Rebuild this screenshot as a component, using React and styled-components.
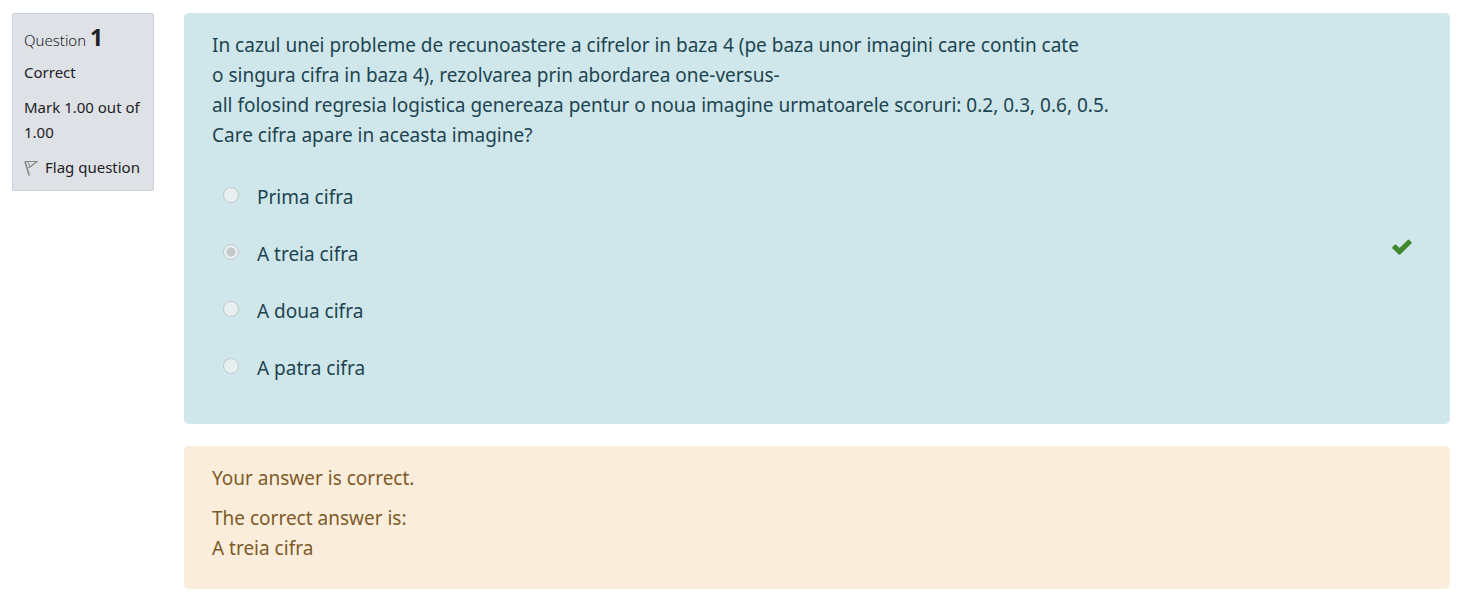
import React from 'react';
import styled, { createGlobalStyle } from 'styled-components';

const GlobalStyle = createGlobalStyle`
  * { box-sizing: border-box; }
  body {
    margin: 0;
    background: #fff;
    font-family: "Segoe UI", "Noto Sans", "Open Sans", sans-serif;
    font-size: 19px;
    line-height: 30px;
  }
`;

const Question = styled.main`
  display: flex;
  align-items: flex-start;
  gap: 30px;
  padding: 13px 15px 16px 12px;
`;

const Info = styled.aside`
  flex: 0 0 142px;
  padding: 9px 10px 10px 11px;
  border: 1px solid #cad0d7;
  border-radius: 2px;
  background: #dee2e6;
  color: #1d2125;
  font-size: 15px;
  line-height: 25px;
`;

const Number = styled.h3`
  margin: 0 0 6px;
  font-size: 15px;
  font-weight: 300;
  line-height: 28px;
`;

const NumberValue = styled.span`
  font-size: 23px;
  font-weight: 700;
  line-height: 28px;
`;

const InfoLine = styled.div`
  margin-bottom: 10px;
`;

const FlagButton = styled.button`
  display: flex;
  align-items: center;
  gap: 7px;
  padding: 0;
  border: 0;
  background: none;
  color: inherit;
  font: inherit;
  white-space: nowrap;
`;

const Content = styled.div`
  flex: 1;
  min-width: 0;
  display: flex;
  flex-direction: column;
  gap: 22px;
`;

const Panel = styled.section`
  border-radius: 5px;
  padding: 17px 28px ${(p) => (p.$feedback ? 26 : 28)}px;
  background: ${(p) => (p.$feedback ? '#fbeddb' : '#cfe6ea')};
  color: ${(p) => (p.$feedback ? '#7d5a29' : '#1d4451')};
`;

const Text = styled.p`
  margin: 0 0 ${(p) => p.$gap || 0}px;
`;

const Options = styled.fieldset`
  margin: 0;
  padding: 0;
  border: 0;
`;

const Option = styled.div`
  display: flex;
  align-items: center;
  min-height: 57px;
  padding: 0 10px 0 11px;
`;

const Radio = styled.input`
  appearance: none;
  flex: none;
  width: 16px;
  height: 16px;
  margin: 0 18px 4px 0;
  border: 1px solid #c4c9cb;
  border-radius: 50%;
  background: #e7eff1;

  &:checked {
    background: radial-gradient(circle, #c4c9ca 0 4px, #e7eff1 5px);
  }
`;

const OptionLabel = styled.label`
  flex: 1;
`;

const CheckIcon = styled.svg`
  width: 20px;
  height: 16px;
  margin-bottom: 14px;
  fill: #42862d;
`;

const FlagIcon = () => (
  <svg width="14" height="16" viewBox="0 0 14 16" fill="none" stroke="#858789" aria-hidden="true">
    <path d="M1 1.5 L5.2 15.5" strokeWidth="1.6" />
    <path d="M1 1.5 H13 L4.5 8" strokeWidth="1.2" />
    <path d="M4 2 L6 7" strokeWidth="1" />
  </svg>
);

const answers = ['Prima cifra', 'A treia cifra', 'A doua cifra', 'A patra cifra'];
const selected = 1;

export default function App() {
  return (
    <>
      <GlobalStyle />
      <Question>
        <Info>
          <Number>
            Question <NumberValue>1</NumberValue>
          </Number>
          <InfoLine>Correct</InfoLine>
          <InfoLine>Mark 1.00 out of 1.00</InfoLine>
          <FlagButton type="button">
            <FlagIcon />
            Flag question
          </FlagButton>
        </Info>
        <Content>
          <Panel>
            <Text $gap={18}>
              In cazul unei probleme de recunoastere a cifrelor in baza 4 (pe baza unor imagini care contin cate
              <br />
              o singura cifra in baza 4), rezolvarea prin abordarea one-versus-
              <br />
              all folosind regresia logistica genereaza pentur o noua imagine urmatoarele scoruri: 0.2, 0.3, 0.6, 0.5.
              <br />
              Care cifra apare in aceasta imagine?
            </Text>
            <Options aria-label="Answer">
              {answers.map((answer, i) => (
                <Option key={answer}>
                  <Radio type="radio" name="answer" id={`answer${i}`} defaultChecked={i === selected} disabled />
                  <OptionLabel htmlFor={`answer${i}`}>{answer}</OptionLabel>
                  {i === selected && (
                    <CheckIcon viewBox="0 0 20 16" role="img" aria-label="Correct">
                      <path d="M.5 7.9 2.6 5.8Q3.4 5.1 4.2 5.8L7.5 9 15.7.9Q16.5.2 17.3.9L19.4 3Q20.1 3.8 19.4 4.6L8.3 15.5Q7.5 16.1 6.7 15.5L.5 9.4Q-.2 8.7.5 7.9Z" />
                    </CheckIcon>
                  )}
                </Option>
              ))}
            </Options>
          </Panel>
          <Panel $feedback>
            <Text $gap={10}>Your answer is correct.</Text>
            <Text>
              The correct answer is:
              <br />
              A treia cifra
            </Text>
          </Panel>
        </Content>
      </Question>
    </>
  );
}
